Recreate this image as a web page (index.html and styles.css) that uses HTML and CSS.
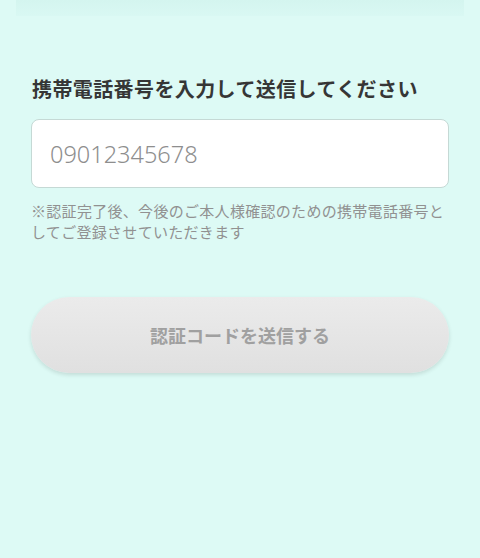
FILE: index.html
```html
<!DOCTYPE html>
<html lang="ja">
<head>
<meta charset="utf-8">
<link rel="stylesheet" href="styles.css">
</head>
<body>
<div class="topbar"></div>
<main class="content">
  <h1 class="title">携帯電話番号を入力して送信してください</h1>
  <div class="field">
    <input class="input" type="tel" placeholder="09012345678">
  </div>
  <p class="note">※認証完了後、今後のご本人様確認のための携帯電話番号としてご登録させていただきます</p>
  <button class="btn" type="button" disabled>認証コードを送信する</button>
</main>
</body>
</html>
```
FILE: styles.css
```css
html, body {
  margin: 0;
  padding: 0;
}
body {
  background: #ddfaf5;
  font-family: "Noto Sans CJK JP", "Noto Sans", sans-serif;
  width: 480px;
  height: 558px;
  overflow: hidden;
}
.topbar {
  margin: 0 16px;
  height: 16px;
  background: linear-gradient(#d4f5ef, #d9f8f3);
}
.content {
  padding: 59px 31px 0;
  display: flex;
  flex-direction: column;
}
.title {
  margin: 0;
  font-size: 20px;
  line-height: 28px;
  font-weight: 700;
  color: #363636;
  padding-left: 1px;
  letter-spacing: 0.4px;
}
.field {
  margin-top: 16px;
}
.input {
  box-sizing: border-box;
  width: 100%;
  height: 69px;
  border: 1px solid #c5d9d5;
  border-radius: 8px;
  background: #fff;
  padding: 0 18px;
  font-family: "Noto Sans", "Noto Sans CJK JP", sans-serif;
  font-size: 23.5px;
  font-weight: 300;
  color: #333;
  outline: none;
}
.input::placeholder {
  color: #8e8e8e;
}
.note {
  margin: 12px 0 0;
  font-size: 15px;
  line-height: 21px;
  letter-spacing: 0.3px;
  color: #919191;
}
.btn {
  margin-top: 55px;
  height: 76px;
  width: 100%;
  border: none;
  border-radius: 38px;
  background: linear-gradient(#ebebeb, #e0e0e0);
  box-shadow: 0 2px 4px rgba(0,0,0,0.12);
  font-family: "Noto Sans CJK JP", sans-serif;
  font-size: 18px;
  font-weight: 700;
  color: #a0a0a0;
}
```
